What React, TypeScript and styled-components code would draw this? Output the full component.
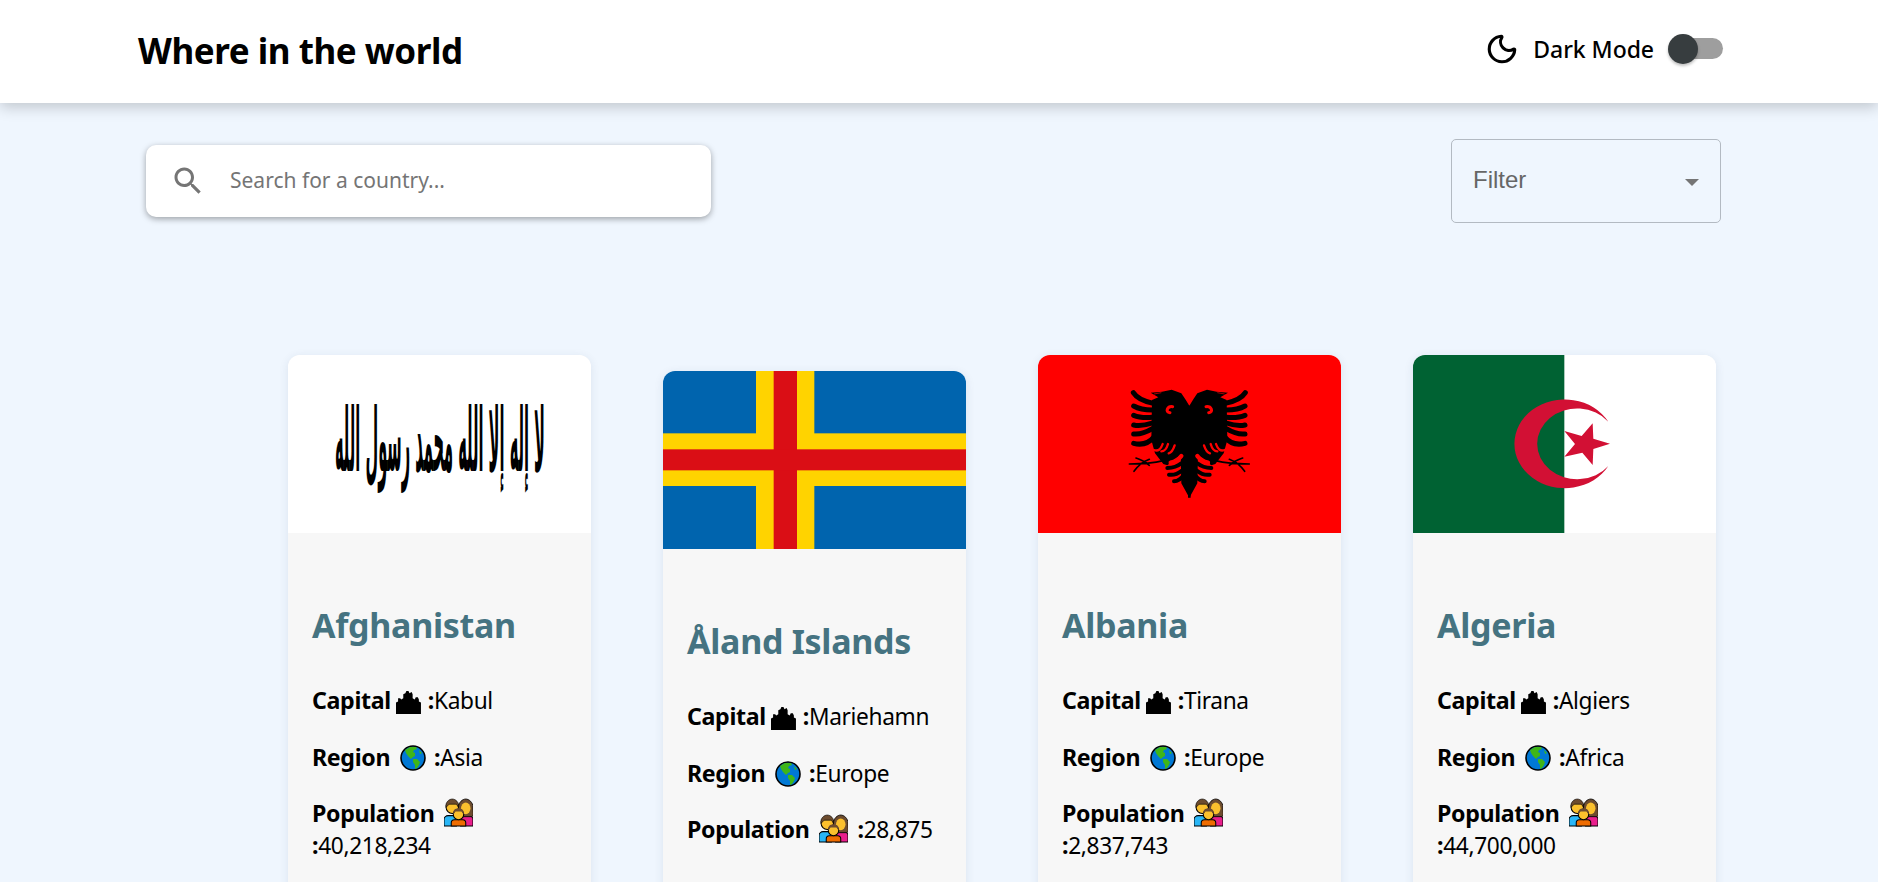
import React from "react";
import styled, { createGlobalStyle } from "styled-components";
import { Moon } from "lucide-react";

const FONT = `"Noto Sans", "Open Sans", sans-serif`;

const Global = createGlobalStyle`
  html, body { margin: 0; padding: 0; height: 882px; overflow: hidden; background: #eff6fe; }
  body { font-family: ${FONT}; color: #000; }
  * { box-sizing: border-box; }
`;

const Page = styled.div`
  height: 882px;
  overflow: hidden;
  background: #eff6fe;
`;
const Header = styled.header`
  position: relative;
  height: 103px;
  background: #fff;
  box-shadow: 0 4px 14px rgba(0, 0, 0, 0.2);
  display: flex;
  align-items: center;
  justify-content: space-between;
  padding: 0 155px 0 138px;
`;
const Title = styled.h1`
  margin: -2px 0 0;
  font-size: 35px;
  font-weight: 700;
  letter-spacing: -0.45px;
`;
const ModeGroup = styled.div`
  display: flex;
  align-items: center;
  margin-top: -5px;
`;
const ModeLabel = styled.span`
  margin-left: 14px;
  font-size: 23px;
  font-weight: 500;
  letter-spacing: -0.05px;
`;
const Track = styled.div`
  position: relative;
  width: 55px;
  height: 30px;
  margin-left: 14px;
  &::before {
    content: "";
    position: absolute;
    left: 12px;
    right: 0;
    top: 4px;
    height: 21px;
    border-radius: 11px;
    background: #9e9e9e;
  }
`;
const Thumb = styled.div`
  position: absolute;
  left: 0;
  top: 0;
  width: 30px;
  height: 30px;
  border-radius: 50%;
  background: #373d3f;
  box-shadow: 0 2px 3px rgba(0, 0, 0, 0.25);
`;
const Toolbar = styled.div`
  height: 252px;
  padding: 36px 157px 0 146px;
  display: flex;
  align-items: flex-start;
  justify-content: space-between;
`;
const SearchBox = styled.label`
  width: 565px;
  height: 72px;
  margin-top: 6px;
  background: #fff;
  border-radius: 10px;
  box-shadow: 0 2px 6px rgba(0, 0, 0, 0.35);
  display: flex;
  align-items: center;
  padding-left: 24px;
  color: #757575;
`;
const SearchInput = styled.input`
  border: 0;
  outline: 0;
  background: transparent;
  flex: 1;
  margin: -2px 0 0 24px;
  padding: 0;
  font-family: ${FONT};
  font-size: 21px;
  &::placeholder { color: #757575; opacity: 1; }
`;
const FilterBox = styled.div`
  width: 270px;
  height: 84px;
  border: 1px solid #b3bac2;
  border-radius: 5px;
  display: flex;
  align-items: center;
  justify-content: space-between;
  padding: 0 21px 2px 21px;
  color: #666;
  font-family: "Liberation Sans", Arial, sans-serif;
  font-size: 24px;
`;
const Caret = styled.span`
  width: 0;
  height: 0;
  border-left: 7px solid transparent;
  border-right: 7px solid transparent;
  border-top: 7px solid #757575;
  margin-top: 5px;
`;
const Grid = styled.main`
  display: grid;
  grid-template-columns: repeat(4, 303px);
  column-gap: 72px;
  align-items: center;
  padding-left: 288px;
`;
const Card = styled.article`
  border-radius: 12px;
  overflow: hidden;
  background: #f7f7f7;
  box-shadow: 0 2px 10px rgba(40, 60, 100, 0.1);
`;
const FlagSvg = styled.svg`
  display: block;
  width: 303px;
  height: 178px;
  background: #fff;
`;
const CardBody = styled.div`
  padding: 69px 24px 60px;
`;
const CountryName = styled.h2`
  margin: 0 0 36px;
  font-size: 34px;
  line-height: 46px;
  font-weight: 700;
  color: #457381;
  letter-spacing: -0.3px;
  white-space: nowrap;
`;
const Info = styled.p`
  margin: 0 0 23.5px;
  font-size: 23.2px;
  line-height: 32px;
  letter-spacing: -0.35px;
`;
const Label = styled.b`
  font-weight: 700;
`;
const Value = styled.span`
  font-size: 22.7px;
`;
const Glyph = styled.svg<{ $w: number; $h: number; $ml: number; $mr: number; $drop: number }>`
  display: inline-block;
  width: ${(p) => p.$w}px;
  height: ${(p) => p.$h}px;
  margin: 0 ${(p) => p.$mr}px 0 ${(p) => p.$ml}px;
  vertical-align: ${(p) => -p.$drop}px;
`;

const Castle = () => (
  <Glyph $w={26} $h={23} $ml={5} $mr={6} $drop={5} viewBox="0 0 25 22" aria-hidden="true">
    <path d="M0 22V11l2-1V7h2l1 1 2-1V3l2-1 1-2h2l1 2 2-1 1 2v4l2 1 1-2h2l1 2v2l2 1v11z" fill="#000" />
  </Glyph>
);
const Globe = () => (
  <Glyph $w={26} $h={26} $ml={10} $mr={8} $drop={5} viewBox="0 0 26 26" aria-hidden="true">
    <circle cx="13" cy="13" r="12" fill="#0078d4" stroke="#000" strokeWidth="1.6" />
    <path d="M5 5l5-3 6 0 1 2-3 1-1 2 2 1 0 3-2 1-2 2-3-3-2-3z" fill="#3fb618" />
    <path d="M13 14l4 0 3 3-1 3-2 3-2 1 0-4-2-3z" fill="#3fb618" />
    <path d="M19 5l3 3-2 1z" fill="#3fb618" />
  </Glyph>
);
const Family = () => (
  <Glyph $w={29} $h={29} $ml={10} $mr={9} $drop={5} viewBox="0 0 28 28" aria-hidden="true">
    <path d="M0 27v-6a4 4 0 0 1 4-4h8v10z" fill="#29b6f6" stroke="#000" strokeWidth="1" />
    <path d="M16 27V17h8a4 4 0 0 1 4 4v6z" fill="#e91e8c" stroke="#000" strokeWidth="1" />
    <circle cx="8" cy="9" r="6" fill="#fbc02d" stroke="#000" strokeWidth="1" />
    <path d="M2 9c-1-5 3-8 6-8s7 3 6 8l-2-3H5z" fill="#6d4c2f" stroke="#000" strokeWidth=".6" />
    <path d="M15 18c-2-1-1-4-1-9s4-8 7-8 7 3 7 8 1 8-1 9z" fill="#6d4c2f" stroke="#000" strokeWidth=".8" />
    <ellipse cx="21" cy="10" rx="4.6" ry="5.6" fill="#fbc02d" />
    <path d="M7 27v-3a3 3 0 0 1 3-3h8a3 3 0 0 1 3 3v3z" fill="#ef6c00" stroke="#000" strokeWidth="1" />
    <circle cx="14" cy="16" r="5" fill="#fbc02d" stroke="#000" strokeWidth="1" />
    <path d="M9 16c-1-4 2-6 5-6s6 2 5 6l-2-3h-6z" fill="#6d4c2f" />
  </Glyph>
);

const CalligraphyText = styled.text`
  font-family: "DejaVu Sans", sans-serif;
  font-weight: 700;
  fill: #000;
`;
const AfghanFlag = () => (
  <FlagSvg viewBox="0 0 303 178" role="img">
    <CalligraphyText direction="rtl" x="257" y="0" fontSize="16" transform="translate(0,116) scale(1,5.55)" textLength="210" lengthAdjust="spacingAndGlyphs">لا إله إلا الله محمد رسول الله</CalligraphyText>
  </FlagSvg>
);
const AlandFlag = () => (
  <FlagSvg viewBox="39 63 909 534" role="img">
    <rect x="39" y="63" width="909" height="534" fill="#0064ae" />
    <rect x="318" y="63" width="175" height="534" fill="#ffd300" />
    <rect x="39" y="250" width="909" height="158" fill="#ffd300" />
    <rect x="371" y="63" width="70" height="534" fill="#da0e15" />
    <rect x="39" y="298" width="909" height="63" fill="#da0e15" />
  </FlagSvg>
);
const EagleHalf = () => (
  <g>
    <path d="M482 197L478 197 466 178 454 160 425 149 396 155 362 158 385 172 366 180 364 300 375 340 400 372 412 376 452 345 454 430 478 473 482 473z" fill="#000" />
    <path d="M420 218c-16-2-8-20 8-18" fill="none" stroke="#f00" strokeWidth="9" strokeLinecap="round" />
    <path d="M372 162l22-4" fill="none" stroke="#f00" strokeWidth="2" />
    <g fill="none" stroke="#000" strokeLinecap="round">
      <path d="M310 158c10 16 30 26 60 32" strokeWidth="15" />
      <path d="M311 198c14 8 30 12 56 12" strokeWidth="15" />
      <path d="M311 226c14 6 30 8 56 6" strokeWidth="15" />
      <path d="M311 255c16 4 32 2 56-6" strokeWidth="15" />
      <path d="M311 282c18 2 36-4 56-16" strokeWidth="15" />
      <path d="M311 310c24 6 46 0 62-20" strokeWidth="15" />
      <path d="M412 384c16 0 30-4 42-14" strokeWidth="12" />
      <path d="M417 404c14 2 26-2 38-12" strokeWidth="12" />
      <path d="M432 424c12 0 22-8 30-20" strokeWidth="12" />
      <path d="M298 372c30 0 70-2 102-10M312 394c10-14 30-30 46-36M318 354c14 4 30 14 40 22" strokeWidth="5" />
    </g>
    <g fill="none" stroke="#f00" strokeLinecap="round">
      <path d="M372 330c12 4 20 0 26-18" strokeWidth="7" />
      <path d="M394 334c8 0 16-8 20-22" strokeWidth="7" />
      <path d="M416 340c8-2 14-12 18-24" strokeWidth="7" />
      <path d="M422 368c16-4 26-12 32-20" strokeWidth="13" />
    </g>
  </g>
);
const AlbaniaFlag = () => (
  <FlagSvg viewBox="24 45 909 534" role="img">
    <rect x="24" y="45" width="909" height="534" fill="#f00" />
    <EagleHalf />
    <g transform="translate(956,0) scale(-1,1)"><EagleHalf /></g>
  </FlagSvg>
);
const AlgeriaFlag = () => (
  <FlagSvg viewBox="39 45 909 534" role="img">
    <rect x="39" y="45" width="909" height="534" fill="#fff" />
    <rect x="39" y="45" width="454" height="534" fill="#006233" />
    <path d="M625 245A151 133 0 1 0 625 378A120 106 0 1 1 625 245z" fill="#d21034" />
    <polygon points="630,311 580,296 578,250 545,288 493,273 525,312 493,350 547,338 578,375 580,327" fill="#d21034" />
  </FlagSvg>
);

const countries = [
  { name: "Afghanistan", capital: "Kabul", region: "Asia", population: "40,218,234", Flag: AfghanFlag },
  { name: "Åland Islands", capital: "Mariehamn", region: "Europe", population: "28,875", Flag: AlandFlag },
  { name: "Albania", capital: "Tirana", region: "Europe", population: "2,837,743", Flag: AlbaniaFlag },
  { name: "Algeria", capital: "Algiers", region: "Africa", population: "44,700,000", Flag: AlgeriaFlag },
];

export default function App() {
  return (
    <Page>
      <Global />
      <Header>
        <Title>Where in the world</Title>
        <ModeGroup>
          <Moon size={34} strokeWidth={2.2} color="#000" />
          <ModeLabel>Dark Mode</ModeLabel>
          <Track><Thumb /></Track>
        </ModeGroup>
      </Header>
      <Toolbar>
        <SearchBox>
          <svg width="36" height="36" viewBox="0 0 24 24" fill="currentColor" aria-hidden="true">
            <path d="M15.5 14h-.79l-.28-.27C15.41 12.59 16 11.11 16 9.5 16 5.91 13.09 3 9.5 3S3 5.91 3 9.5 5.91 16 9.5 16c1.61 0 3.09-.59 4.23-1.57l.27.28v.79l5 4.99L20.49 19l-4.99-5zm-6 0C7.01 14 5 11.99 5 9.5S7.01 5 9.5 5 14 7.01 14 9.5 11.99 14 9.5 14z" />
          </svg>
          <SearchInput placeholder="Search for a country..." />
        </SearchBox>
        <FilterBox>Filter<Caret /></FilterBox>
      </Toolbar>
      <Grid>
        {countries.map(({ name, capital, region, population, Flag }) => (
          <Card key={name}>
            <Flag />
            <CardBody>
              <CountryName>{name}</CountryName>
              <Info><Label>Capital<Castle />:</Label><Value>{capital}</Value></Info>
              <Info><Label>Region<Globe />:</Label><Value>{region}</Value></Info>
              <Info><Label>Population<Family />:</Label><Value>{population}</Value></Info>
            </CardBody>
          </Card>
        ))}
      </Grid>
    </Page>
  );
}
